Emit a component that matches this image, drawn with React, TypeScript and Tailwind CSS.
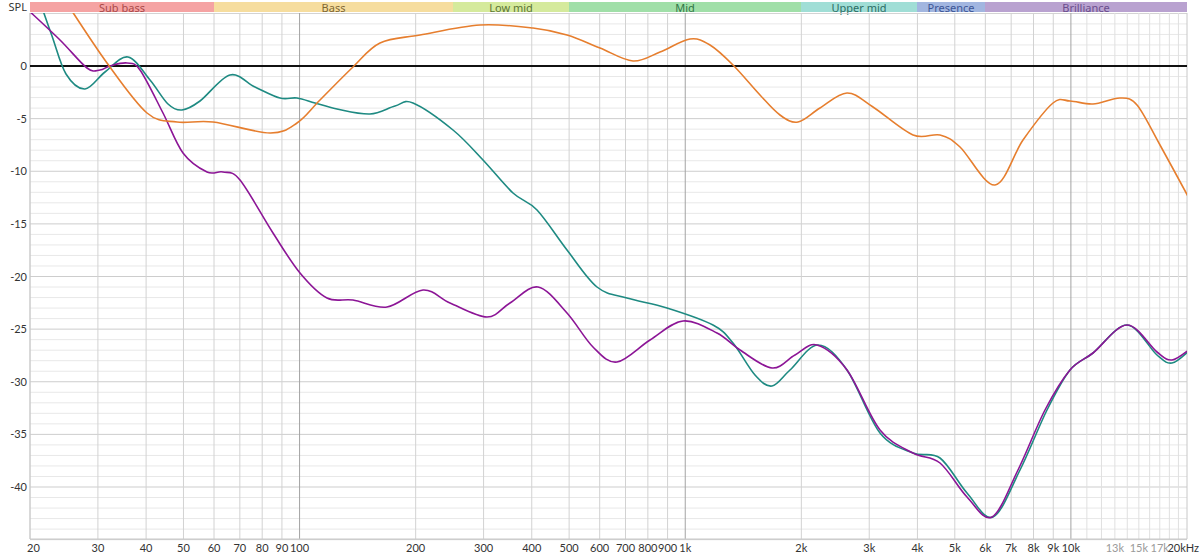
const X0 = 30;
const X1 = 1187;
const PX_DEC = (X1 - X0) / 3;
const Y_TOP = 13;
const Y_BOT = 539;

const fx = (f: number) => X0 + Math.log10(f / 20) * PX_DEC;
const fy = (db: number) => 66 - db * 10.525;

type Pt = [number, number];

// catmull-rom -> cubic bezier
function smooth(pts: Pt[]) {
  let d = `M${pts[0][0]},${pts[0][1]}`;
  for (let i = 0; i < pts.length - 1; i++) {
    const p0 = pts[i - 1] || pts[i];
    const p1 = pts[i];
    const p2 = pts[i + 1];
    const p3 = pts[i + 2] || p2;
    const c1x = p1[0] + (p2[0] - p0[0]) / 6;
    const c1y = p1[1] + (p2[1] - p0[1]) / 6;
    const c2x = p2[0] - (p3[0] - p1[0]) / 6;
    const c2y = p2[1] - (p3[1] - p1[1]) / 6;
    d += ` C${c1x},${c1y} ${c2x},${c2y} ${p2[0]},${p2[1]}`;
  }
  return d;
}

const teal: Pt[] = [
  [40, 2], [52, 36], [66, 74], [85, 89], [105, 72], [128, 57], [150, 80], [168, 104], [182, 110], [200, 101],
  [230, 75], [255, 87], [280, 98], [297, 98], [315, 103], [337, 109], [370, 114], [395, 106], [413, 103],
  [453, 130], [483, 160], [513, 193], [537, 210], [567, 250], [597, 287], [627, 298], [667, 308],
  [713, 325], [733, 343], [755, 375], [772, 386], [790, 370], [818, 345], [847, 370], [880, 433],
  [913, 453], [940, 458], [967, 493], [993, 517], [1020, 470], [1047, 410], [1070, 370], [1093, 353],
  [1127, 325], [1157, 355], [1172, 363], [1190, 350],
];

const purple: Pt[] = [
  [26, 8], [60, 40], [87, 68], [100, 70], [110, 66], [127, 63], [140, 70], [163, 113], [183, 153],
  [207, 172], [223, 172], [240, 180], [273, 233], [300, 273], [327, 298], [353, 300], [387, 307],
  [423, 290], [450, 303], [487, 317], [510, 303], [538, 287], [567, 313], [593, 347], [617, 362],
  [650, 340], [683, 321], [717, 333], [740, 350], [772, 368], [795, 355], [817, 345], [847, 370],
  [880, 430], [913, 453], [940, 463], [967, 497], [992, 517], [1018, 470], [1045, 410], [1070, 370],
  [1093, 353], [1127, 325], [1157, 352], [1172, 360], [1190, 349],
];

const orange: Pt[] = [
  [66, 2], [107, 63], [147, 113], [177, 122], [213, 122], [270, 133], [297, 123], [320, 100], [353, 67],
  [380, 43], [420, 35], [480, 25], [533, 28], [567, 35], [600, 48], [633, 61], [660, 52], [690, 39],
  [710, 45], [733, 65], [760, 95], [780, 115], [798, 122], [820, 108], [847, 93], [873, 107],
  [913, 135], [940, 135], [960, 147], [995, 185], [1023, 140], [1053, 103], [1070, 101], [1093, 104],
  [1120, 98], [1137, 105], [1160, 145], [1190, 200],
];

const bands = [
  { name: 'Sub bass', w: 'w-[184px]', cls: 'bg-[#f5a3a3] text-[#a84848]' },
  { name: 'Bass', w: 'w-[239px]', cls: 'bg-[#f6dd9e] text-[#7d6532]' },
  { name: 'Low mid', w: 'w-[116px]', cls: 'bg-[#d5ea9c] text-[#5b7434]' },
  { name: 'Mid', w: 'w-[232px]', cls: 'bg-[#a0dfa8] text-[#317646]' },
  { name: 'Upper mid', w: 'w-[116px]', cls: 'bg-[#a0ded6] text-[#2b6d64]' },
  { name: 'Presence', w: 'w-[68px]', cls: 'bg-[#a2b6e0] text-[#3c5596]' },
  { name: 'Brilliance', w: 'w-[202px]', cls: 'bg-[#b9a2d0] text-[#6a4d8c]' },
];

const minorFreqs: number[] = [];
for (const dec of [10, 100, 1000]) {
  for (let k = 2; k <= 9; k++) if (dec * k >= 20) minorFreqs.push(dec * k);
}
for (let k = 11; k <= 19; k++) minorFreqs.push(k * 1000);

const xLabels: [number, string, boolean?][] = [
  [30, '30'], [40, '40'], [50, '50'], [60, '60'], [70, '70'], [80, '80'], [90, '90'], [100, '100'],
  [200, '200'], [300, '300'], [400, '400'], [500, '500'], [600, '600'], [700, '700'], [800, '800'],
  [900, '900'], [1000, '1k'], [2000, '2k'], [3000, '3k'], [4000, '4k'], [5000, '5k'], [6000, '6k'],
  [7000, '7k'], [8000, '8k'], [9000, '9k'], [10000, '10k'], [13000, '13k', true], [15000, '15k', true],
  [17000, '17k', true],
];

function Chart() {
  const dbs: number[] = [];
  for (let d = 5; d >= -45; d--) dbs.push(d);
  return (
    <svg width={1200} height={545} viewBox="0 13 1200 545" className="block">
      <defs>
        <clipPath id="plot">
          <rect x={X0} y={Y_TOP} width={X1 - X0} height={Y_BOT - Y_TOP} />
        </clipPath>
      </defs>
      {dbs.map((d) => (
        <line key={d} x1={X0} x2={X1} y1={fy(d)} y2={fy(d)}
          stroke={d % 5 === 0 ? '#cdcdcd' : '#e8e8e8'} strokeWidth={1} />
      ))}
      {minorFreqs.map((f) => (
        <line key={f} x1={fx(f)} x2={fx(f)} y1={Y_TOP} y2={Y_BOT}
          stroke={f > 10000 ? '#e0e0e0' : '#d2d2d2'} strokeWidth={1} />
      ))}
      {[100, 1000, 10000].map((f) => (
        <line key={f} x1={fx(f)} x2={fx(f)} y1={Y_TOP} y2={Y_BOT} stroke="#a3a3a3" strokeWidth={1} />
      ))}
      <line x1={X0} x2={X0} y1={Y_TOP} y2={Y_BOT} stroke="#c8c8c8" />
      <line x1={X1} x2={X1} y1={Y_TOP} y2={Y_BOT} stroke="#c8c8c8" />
      <line x1={X0} x2={X1} y1={Y_BOT} y2={Y_BOT} stroke="#c8c8c8" />
      <line x1={X0} x2={X1} y1={fy(0)} y2={fy(0)} stroke="#111" strokeWidth={2} />
      <g clipPath="url(#plot)" fill="none" strokeWidth={1.6} strokeLinejoin="round">
        <path d={smooth(teal)} stroke="#1e8a82" />
        <path d={smooth(purple)} stroke="#8c1596" />
        <path d={smooth(orange)} stroke="#e67e2e" />
      </g>
      <g fontFamily="Lato, 'Open Sans', sans-serif" fontSize={11} fill="#333">
        {[0, -5, -10, -15, -20, -25, -30, -35, -40].map((d) => (
          <text key={d} x={27} y={fy(d) + 4} textAnchor="end">{d}</text>
        ))}
        <text x={27} y={552}>20</text>
        {xLabels.map(([f, l, dim]) => (
          <text key={l} x={fx(f)} y={552} textAnchor="middle" fill={dim ? '#9a9a9a' : '#333'}>{l}</text>
        ))}
        <text x={1199} y={552} textAnchor="end">20kHz</text>
      </g>
    </svg>
  );
}

export default function App() {
  return (
    <div className="w-[1200px] h-[558px] bg-white overflow-hidden font-['Lato','Open_Sans',sans-serif]">
      <div className="flex h-[13px] pt-[2px]">
        <div className="w-[30px] pr-[3px] text-right text-[11px] leading-[10px] text-[#333]">SPL</div>
        {bands.map((b) => (
          <div key={b.name}
            className={`${b.w} ${b.cls} h-[10px] flex items-center justify-center text-[11px] leading-none`}>
            {b.name}
          </div>
        ))}
      </div>
      <Chart />
    </div>
  );
}
